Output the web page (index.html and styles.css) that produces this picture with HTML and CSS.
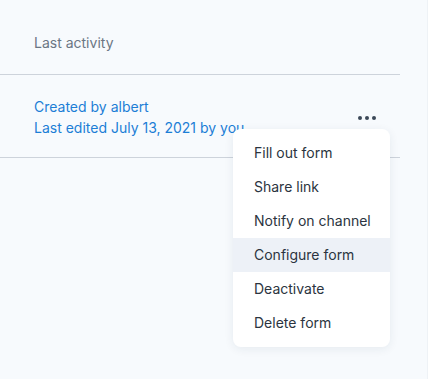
FILE: index.html
```html
<!DOCTYPE html>
<html lang="en">
<head>
    <meta charset="UTF-8">
    <meta name="viewport" content="width=device-width, initial-scale=1.0">
    <title>Forms</title>
    <link rel="stylesheet" href="styles.css">
</head>
<body>
    <div class="page">
        <div class="table">
            <div class="table-head">Last activity</div>
            <div class="table-row">
                <div class="activity">
                    <div>Created by albert</div>
                    <div>Last edited July 13, 2021 by you</div>
                </div>
                <button class="more" aria-label="More actions">
                    <span></span><span></span><span></span>
                </button>
                <ul class="menu">
                    <li>Fill out form</li>
                    <li>Share link</li>
                    <li>Notify on channel</li>
                    <li class="active">Configure form</li>
                    <li>Deactivate</li>
                    <li>Delete form</li>
                </ul>
            </div>
        </div>
        <div class="scroll-edge"></div>
    </div>
</body>
</html>
```

FILE: styles.css
```css
html, body {
    margin: 0;
    height: 100%;
}
body {
    font-family: Inter, "Noto Sans", sans-serif;
    font-size: 14px;
    background-color: #f7fafd;
}
.page {
    display: flex;
    justify-content: space-between;
    height: 100%;
}
.table {
    width: 400px;
}
.scroll-edge {
    width: 1px;
    background-color: #eef2f6;
}
.table-head {
    height: 75px;
    box-sizing: border-box;
    padding: 33px 0 0 34px;
    line-height: 20px;
    color: #6b7684;
    border-bottom: 1px solid #cdd3db;
}
.table-row {
    position: relative;
    height: 82px;
    display: flex;
    align-items: center;
    justify-content: space-between;
    padding: 0 24px 0 34px;
    border-bottom: 1px solid #cdd3db;
}
.activity {
    color: #1c7ed6;
    line-height: 21px;
    padding-top: 1px;
}
.more {
    display: flex;
    gap: 3px;
    padding: 0;
    margin-top: 3px;
    border: none;
    background: none;
    cursor: pointer;
}
.more span {
    width: 4px;
    height: 4px;
    border-radius: 50%;
    background-color: #3c4858;
}
.menu {
    position: absolute;
    top: 54px;
    right: 10px;
    width: 157px;
    margin: 0;
    padding: 7px 0;
    list-style: none;
    background: white;
    border-radius: 8px;
    box-shadow: 0 2px 10px rgba(30, 50, 80, 0.08);
}
.menu li {
    height: 34px;
    line-height: 34px;
    padding-left: 21px;
    color: #2b3440;
}
.menu li.active {
    background-color: #edf1f7;
}
```
